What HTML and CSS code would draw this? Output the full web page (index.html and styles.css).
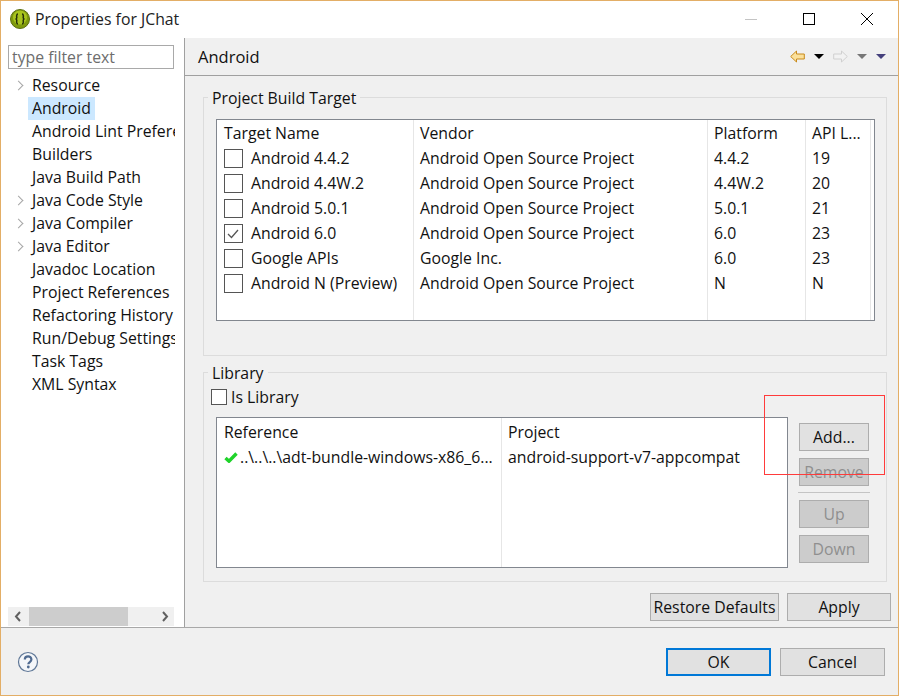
FILE: index.html
```html
<!DOCTYPE html>
<html lang="en">
<head>
  <meta charset="UTF-8">
  <meta name="viewport" content="width=device-width, initial-scale=1.0">
  <title>Properties for JChat</title>
  <link rel="stylesheet" href="styles.css">
</head>
<body>
  <div class="window">
    <div class="titlebar">
      <svg class="app-icon" width="20" height="20" viewBox="0 0 20 20">
        <circle cx="10" cy="10" r="9.500" fill="#7f9a0c"/>
        <circle cx="10" cy="8.500" r="7" fill="#a9c41f"/>
        <circle cx="10" cy="10" r="9.500" fill="none" stroke="#5a6e10"/>
        <path d="M8 5c-2 0-1.200 3.500-1.200 3.500 0 1-.8 1.500-1.300 1.500.5 0 1.300.5 1.300 1.500 0 0-.8 3.500 1.200 3.500M12 5c2 0 1.200 3.500 1.200 3.500 0 1 .8 1.500 1.300 1.500-.5 0-1.300.5-1.300 1.500 0 0 .8 3.500-1.200 3.500" fill="none" stroke="#26300a" stroke-width="1.500"/>
      </svg>
      <span class="title-text">Properties for JChat</span>
      <div class="win-controls">
        <svg width="14" height="14" viewBox="0 0 14 14"><path d="M1 7.500h12" stroke="#c4c4c4"/></svg>
        <svg width="14" height="14" viewBox="0 0 14 14"><rect x="1.500" y="1.500" width="11" height="11" fill="none" stroke="#000"/></svg>
        <svg width="14" height="14" viewBox="0 0 14 14"><path d="M1 1l12 12M13 1L1 13" stroke="#000"/></svg>
      </div>
    </div>

    <div class="main">
      <div class="sidebar">
        <input class="filter" type="text" placeholder="type filter text">
        <ul class="tree">
          <li class="has-kids">Resource</li>
          <li><span class="selected">Android</span></li>
          <li>Android Lint Preferences</li>
          <li>Builders</li>
          <li>Java Build Path</li>
          <li class="has-kids">Java Code Style</li>
          <li class="has-kids">Java Compiler</li>
          <li class="has-kids">Java Editor</li>
          <li>Javadoc Location</li>
          <li>Project References</li>
          <li>Refactoring History</li>
          <li>Run/Debug Settings</li>
          <li>Task Tags</li>
          <li>XML Syntax</li>
        </ul>
        <div class="hscroll">
          <svg width="21" height="19" viewBox="0 0 21 19"><path d="M12 5l-4 4.500 4 4.500" fill="none" stroke="#606060" stroke-width="2"/></svg>
          <div class="hscroll-track"><div class="hscroll-thumb"></div></div>
          <svg width="21" height="19" viewBox="0 0 21 19"><path d="M10 5l4 4.500-4 4.500" fill="none" stroke="#606060" stroke-width="2"/></svg>
        </div>
      </div>

      <div class="content">
        <div class="content-head">
          <span class="content-title">Android</span>
          <div class="nav-icons">
            <svg width="15" height="13" viewBox="0 0 15 13"><path d="M.7 6.500L6.500 1v3h7.800v5H6.500v3z" fill="#fbe09a" stroke="#c88a1c"/></svg>
            <svg class="drop" width="10" height="5" viewBox="0 0 10 5"><path d="M0 0h10L5 5z" fill="#000"/></svg>
            <svg width="15" height="13" viewBox="0 0 15 13"><path d="M14.300 6.500L8.500 1v3H.7v5h7.800v3z" fill="#f2f2f2" stroke="#d0d0d0"/></svg>
            <svg class="drop" width="10" height="5" viewBox="0 0 10 5"><path d="M0 0h10L5 5z" fill="#777"/></svg>
            <svg class="drop" width="10" height="5" viewBox="0 0 10 5"><path d="M0 0h10L5 5z" fill="#44407c"/></svg>
          </div>
        </div>

        <div class="content-body">
          <fieldset class="group group-target">
            <legend>Project Build Target</legend>
            <table class="grid targets">
              <thead>
                <tr><th class="col-name">Target Name</th><th class="col-vendor">Vendor</th><th class="col-platform">Platform</th><th class="col-api">API L...</th><th></th></tr>
              </thead>
              <tbody>
                <tr><td><span class="check"></span>Android 4.4.2</td><td>Android Open Source Project</td><td>4.4.2</td><td>19</td><td></td></tr>
                <tr><td><span class="check"></span>Android 4.4W.2</td><td>Android Open Source Project</td><td>4.4W.2</td><td>20</td><td></td></tr>
                <tr><td><span class="check"></span>Android 5.0.1</td><td>Android Open Source Project</td><td>5.0.1</td><td>21</td><td></td></tr>
                <tr><td><span class="check"><svg width="17" height="17" viewBox="0 0 17 17"><path d="M3 9l3.500 3.500L13 5" fill="none" stroke="#555" stroke-width="1.300"/></svg></span>Android 6.0</td><td>Android Open Source Project</td><td>6.0</td><td>23</td><td></td></tr>
                <tr><td><span class="check"></span>Google APIs</td><td>Google Inc.</td><td>6.0</td><td>23</td><td></td></tr>
                <tr><td><span class="check"></span>Android N (Preview)</td><td>Android Open Source Project</td><td>N</td><td>N</td><td></td></tr>
              </tbody>
            </table>
          </fieldset>

          <fieldset class="group group-library">
            <legend>Library</legend>
            <label class="is-library"><span class="check"></span>Is Library</label>
            <div class="library-row">
              <table class="grid references">
                <thead>
                  <tr><th class="col-ref">Reference</th><th>Project</th></tr>
                </thead>
                <tbody>
                  <tr>
                    <td><svg class="ok-mark" width="14" height="11" viewBox="0 0 14 11"><path d="M1.500 6L5 9.200 12.500 1.500" fill="none" stroke="#1fd32a" stroke-width="3.400"/></svg>..\..\..\adt-bundle-windows-x86_6...</td>
                    <td>android-support-v7-appcompat</td>
                  </tr>
                </tbody>
              </table>
              <div class="side-buttons">
                <button class="btn">Add...</button>
                <button class="btn" disabled>Remove</button>
                <div class="side-sep"></div>
                <button class="btn" disabled>Up</button>
                <button class="btn" disabled>Down</button>
              </div>
            </div>
          </fieldset>

          <div class="apply-row">
            <button class="btn btn-restore">Restore Defaults</button>
            <button class="btn btn-apply">Apply</button>
          </div>
        </div>
      </div>
    </div>

    <div class="footer">
      <svg width="22" height="22" viewBox="0 0 22 22">
        <circle cx="11" cy="11" r="9.500" fill="#f4f6f9" stroke="#5f7797" stroke-width="1.200"/>
        <path d="M7.800 8.500c0-4.300 6.600-4.300 6.600 0 0 2.500-3.100 2.500-3.100 4.800" fill="none" stroke="#4f6a90" stroke-width="2.200"/>
        <circle cx="11.300" cy="16" r="1.400" fill="#4f6a90"/>
      </svg>
      <div class="footer-buttons">
        <button class="btn btn-main btn-default">OK</button>
        <button class="btn btn-main">Cancel</button>
      </div>
    </div>

    <div class="annotation"></div>
  </div>
</body>
</html>
```

FILE: styles.css
```css
* {
  box-sizing: border-box;
}
html, body {
  margin: 0;
  height: 100%;
  overflow: hidden;
}
body {
  font-family: 'Open Sans', 'Noto Sans', sans-serif;
  font-size: 15.8px;
  color: #111;
}
.window {
  position: relative;
  width: 899px;
  height: 696px;
  display: flex;
  flex-direction: column;
  border: 1px solid #e3ae66;
  background: #f0f0f0;
}
.titlebar {
  height: 37px;
  flex: none;
  display: flex;
  align-items: center;
  padding: 0 0 1px 9px;
  background: #fff;
}
.app-icon {
  margin-right: 5px;
}
.title-text {
  color: #222;
}
.win-controls {
  margin-left: auto;
  display: flex;
  gap: 44px;
  padding-right: 24px;
}
.main {
  flex: 1;
  display: flex;
  min-height: 0;
  border-bottom: 1px solid #a8a8a8;
}
.sidebar {
  width: 184px;
  flex: none;
  display: flex;
  flex-direction: column;
  padding: 7px 9px 1px 7px;
  background: #fff;
  border-right: 1px solid #a0a0a0;
}
.filter {
  width: 166px;
  height: 24px;
  padding: 0 3px;
  border: 1px solid #a9a9a9;
  font: inherit;
  outline: none;
}
.filter::placeholder {
  color: #6d6d6d;
  opacity: 1;
}
.tree {
  list-style: none;
  margin: 5px 0 0;
  padding: 0;
  flex: 1;
  overflow: hidden;
}
.tree li {
  position: relative;
  height: 23px;
  line-height: 23px;
  padding-left: 24px;
  white-space: nowrap;
}
.tree li.has-kids::before {
  content: "";
  position: absolute;
  left: 7px;
  top: 8px;
  width: 6px;
  height: 6px;
  border-top: 1.500px solid #a6a6a6;
  border-right: 1.500px solid #a6a6a6;
  transform: rotate(45deg);
}
.selected {
  display: inline-block;
  margin-left: -4px;
  padding: 0 4px;
  background: #cce8ff;
}
.hscroll {
  flex: none;
  width: 166px;
  height: 19px;
  display: flex;
  background: #f0f0f0;
}
.hscroll-track {
  flex: 1;
}
.hscroll-thumb {
  width: 99px;
  height: 19px;
  background: #cdcdcd;
}
.content {
  flex: 1;
  min-width: 0;
  display: flex;
  flex-direction: column;
}
.content-head {
  height: 38px;
  flex: none;
  display: flex;
  align-items: center;
  justify-content: space-between;
  padding: 0 12px 1px 13px;
  border-bottom: 1px solid #a0a0a0;
}
.content-title {
  font-size: 16.5px;
}
.nav-icons {
  display: flex;
  align-items: center;
  gap: 9px;
}
.content-body {
  flex: 1;
  padding: 10px 11px 0 18px;
  display: flex;
  flex-direction: column;
}
.group {
  margin: 0;
  padding: 0;
  border: 1px solid #dcdcdc;
  min-width: 0;
}
.group legend {
  margin-left: -8px;
  padding: 2px 4px 0;
  line-height: 20px;
}
.group-target {
  height: 270px;
  padding: 11px 12px 0;
}
.group-library {
  height: 221px;
  margin-top: 5px;
  padding: 0 0 0 12px;
}
.grid {
  border: 1px solid #82878f;
  border-collapse: separate;
  border-spacing: 0;
  background: #fff;
  table-layout: fixed;
}
.grid th, .grid td {
  height: 25px;
  padding: 0 0 0 6px;
  font-weight: 400;
  text-align: left;
  white-space: nowrap;
  overflow: hidden;
  border-right: 1px solid #e6e6e6;
}
.grid th:first-child, .grid td:first-child {
  padding-left: 7px;
}
.grid th:last-child, .grid td:last-child {
  border-right: none;
}
.targets {
  width: 659px;
  height: 200px;
}
.targets tbody tr:last-child td {
  height: 50px;
  padding-top: 2px;
  vertical-align: top;
}
.col-name { width: 197px; }
.col-vendor { width: 294px; }
.col-platform { width: 98px; }
.col-api { width: 65px; }
.check {
  display: inline-block;
  width: 19px;
  height: 19px;
  margin: 2px 8px 0 0;
  border: 1px solid #555;
  background: #fff;
  vertical-align: top;
}
.check svg {
  display: block;
}
.is-library {
  display: flex;
  align-items: center;
  height: 20px;
  margin: 4px 0 0 -5px;
}
.is-library .check {
  width: 16px;
  height: 16px;
  margin: 0 4px 0 0;
}
.library-row {
  display: flex;
  align-items: flex-start;
  margin-top: 10px;
}
.references {
  width: 572px;
  height: 151px;
}
.references thead th {
  padding-top: 2px;
}
.references tbody td {
  height: 124px;
  padding-top: 3px;
  vertical-align: top;
}
.col-ref { width: 285px; }
.ok-mark {
  margin-right: 2px;
}
.side-buttons {
  width: 70px;
  margin: 6px 0 0 11px;
  display: flex;
  flex-direction: column;
  gap: 7px;
}
.side-sep {
  width: 72px;
  height: 1px;
  margin: -1px 0 0 -1px;
  background: #c4c4c4;
}
.btn {
  height: 28px;
  padding: 0;
  border: 1px solid #adadad;
  background: #e1e1e1;
  color: #111;
  font: inherit;
}
.btn:disabled {
  background: #cccccc;
  color: #8f8f8f;
}
.apply-row {
  display: flex;
  justify-content: flex-end;
  gap: 8px;
  margin: 11px -4px 0 0;
}
.btn-restore { width: 129px; }
.btn-apply { width: 104px; }
.footer {
  height: 67px;
  flex: none;
  display: flex;
  align-items: center;
  justify-content: space-between;
  padding: 1px 13px 0 16px;
}
.footer-buttons {
  display: flex;
  gap: 9px;
}
.btn-main {
  width: 105px;
}
.btn-default {
  border: 2px solid #0078d7;
}
.annotation {
  position: absolute;
  left: 763px;
  top: 394px;
  width: 121px;
  height: 80px;
  border: 1px solid #ff3b3b;
}
```
